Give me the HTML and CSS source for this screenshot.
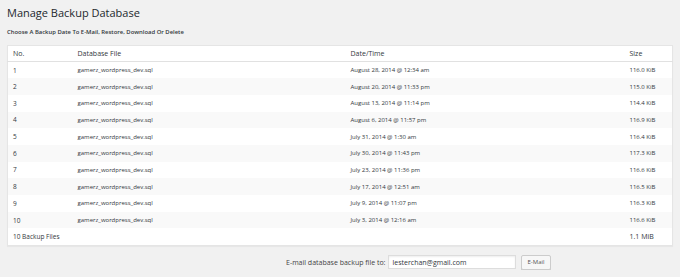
FILE: index.html
```html
<!DOCTYPE html>
<html lang="en">
<head>
    <meta charset="UTF-8">
    <title>Manage Backup Database</title>
    <link rel="stylesheet" href="styles.css">
</head>
<body>
    <div class="wrap">
        <h1>Manage Backup Database</h1>
        <p class="lead">Choose A Backup Date To E-Mail, Restore, Download Or Delete</p>
        <table class="backups">
            <thead>
                <tr>
                    <th class="c-no">No.</th>
                    <th class="c-file">Database File</th>
                    <th class="c-date">Date/Time</th>
                    <th class="c-size">Size</th>
                </tr>
            </thead>
            <tbody>
                <tr><td>1</td><td>gamerz_wordpress_dev.sql</td><td>August 28, 2014 @ 12:34 am</td><td>116.0 KiB</td></tr>
                <tr><td>2</td><td>gamerz_wordpress_dev.sql</td><td>August 20, 2014 @ 11:33 pm</td><td>115.0 KiB</td></tr>
                <tr><td>3</td><td>gamerz_wordpress_dev.sql</td><td>August 13, 2014 @ 11:14 pm</td><td>114.4 KiB</td></tr>
                <tr><td>4</td><td>gamerz_wordpress_dev.sql</td><td>August 6, 2014 @ 11:57 pm</td><td>116.9 KiB</td></tr>
                <tr><td>5</td><td>gamerz_wordpress_dev.sql</td><td>July 31, 2014 @ 1:30 am</td><td>116.4 KiB</td></tr>
                <tr><td>6</td><td>gamerz_wordpress_dev.sql</td><td>July 30, 2014 @ 11:43 pm</td><td>117.3 KiB</td></tr>
                <tr><td>7</td><td>gamerz_wordpress_dev.sql</td><td>July 23, 2014 @ 11:36 pm</td><td>116.6 KiB</td></tr>
                <tr><td>8</td><td>gamerz_wordpress_dev.sql</td><td>July 17, 2014 @ 12:51 am</td><td>116.5 KiB</td></tr>
                <tr><td>9</td><td>gamerz_wordpress_dev.sql</td><td>July 9, 2014 @ 11:07 pm</td><td>116.3 KiB</td></tr>
                <tr><td>10</td><td>gamerz_wordpress_dev.sql</td><td>July 3, 2014 @ 12:16 am</td><td>116.6 KiB</td></tr>
            </tbody>
            <tfoot>
                <tr>
                    <td colspan="3" class="total">10 Backup Files</td>
                    <td class="total">1.1 MiB</td>
                </tr>
            </tfoot>
        </table>
        <form class="mail">
            <label for="mail-to">E-mail database backup file to:</label>
            <input type="text" id="mail-to" value="lesterchan@gmail.com">
            <button type="button">E-Mail</button>
        </form>
    </div>
</body>
</html>
```

FILE: styles.css
```css
* {
    margin: 0;
    padding: 0;
    box-sizing: border-box;
}
body {
    background-color: #F1F1F1;
    color: #444444;
    font-family: "Open Sans", sans-serif;
}
.wrap {
    padding: 5px 7px 0;
}
h1 {
    font-size: 11px;
    font-weight: normal;
    color: #23282D;
    line-height: 16px;
}
.lead {
    font-size: 5.9px;
    font-weight: 600;
    color: #32373C;
    margin-top: 7px;
    line-height: 8px;
}
.backups {
    width: 100%;
    margin-top: 9px;
    border-collapse: collapse;
    background-color: #FFFFFF;
    box-shadow: 0 1px 1px rgba(0, 0, 0, .04);
    border: 1px solid #E5E5E5;
    font-size: 6px;
    color: #32373C;
}
.backups th {
    font-weight: normal;
    text-align: left;
    font-size: 7px;
    height: 16px;
    padding: 0 5px;
    border-bottom: 1px solid #E1E1E1;
}
.backups td {
    height: 16.7px;
    padding: 0 5px;
}
.backups td:first-child {
    font-size: 6.5px;
}
.backups tbody tr:nth-child(even) {
    background-color: #F9F9F9;
}
.backups .c-no {
    width: 65px;
}
.backups .c-file {
    width: 273px;
}
.backups .c-date {
    width: 279px;
}
.backups .total {
    font-size: 7px;
    border-bottom: 1px dotted #CCCCCC;
}
.mail {
    display: flex;
    align-items: center;
    margin-top: 9px;
    padding-left: 279px;
    font-size: 7px;
    color: #444444;
}
.mail label {
    margin-right: 3px;
}
.mail input {
    width: 128px;
    height: 14px;
    border: 1px solid #DDDDDD;
    box-shadow: inset 0 1px 2px rgba(0, 0, 0, .07);
    background-color: #FFFFFF;
    font-family: "Open Sans", sans-serif;
    font-size: 7px;
    color: #32373C;
    padding: 0 3px;
}
.mail button {
    margin-left: 5px;
    height: 15px;
    padding: 0 5px;
    font-family: "Open Sans", sans-serif;
    font-size: 6px;
    color: #555555;
    background-color: #F7F7F7;
    border: 1px solid #CCCCCC;
    border-radius: 2px;
    box-shadow: 0 1px 0 #CCCCCC;
}
```
